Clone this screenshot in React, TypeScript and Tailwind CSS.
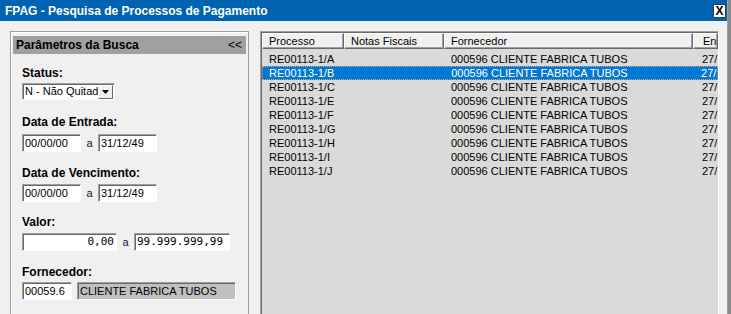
import type { ReactNode } from 'react'

const rows = ['A', 'B', 'C', 'E', 'F', 'G', 'H', 'I', 'J']

function Sunken({ className, children }: { className?: string; children?: ReactNode }) {
  return (
    <div
      className={
        'flex items-center border border-t-[#a0a0a0] border-l-[#a0a0a0] border-r-white border-b-white shadow-[inset_1px_1px_0_#696969] ' +
        (className ?? '')
      }
    >
      {children}
    </div>
  )
}

function Label({ children, className }: { children: ReactNode; className?: string }) {
  return <div className={'text-[12px] leading-[14px] font-bold text-black ' + (className ?? '')}>{children}</div>
}

function HeaderCell({ children, className }: { children: ReactNode; className?: string }) {
  return (
    <div
      className={
        'h-[16px] shrink-0 overflow-hidden whitespace-nowrap border border-t-white border-l-white border-r-[#696969] border-b-[#696969] bg-[#f0f0f0] pl-[6px] text-[11px] leading-[14px] shadow-[inset_-1px_-1px_0_#a0a0a0] ' +
        (className ?? '')
      }
    >
      {children}
    </div>
  )
}

export default function App() {
  return (
    <div className="flex h-[314px] w-[731px] overflow-hidden bg-[#f0f0f0] font-['Liberation_Sans',Arial,sans-serif] text-black">
      <div className="flex w-[727px] flex-col">
        {/* title bar */}
        <div className="flex h-[21px] shrink-0 items-center justify-between bg-[#0063b1] pl-[5px] pr-[1px]">
          <span className="text-[12px] font-bold text-white">FPAG - Pesquisa de Processos de Pagamento</span>
          <div className="mt-[1px] flex h-[14px] w-[13px] items-center justify-center border border-[#3a3a3a] bg-white text-[12px] leading-none font-bold">
            X
          </div>
        </div>

        <div className="flex flex-1 pl-[10px] pt-[10px]">
          {/* search params panel */}
          <div className="flex w-[239px] shrink-0 flex-col border border-r-[#a0a0a0] border-b-0 border-[#a0a0a0] px-[2px] pt-[4px] shadow-[inset_1px_1px_0_#fff]">
            <div className="flex h-[18px] items-center justify-between bg-[#a0a0a0] pl-[3px] pr-[4px] text-[12px] font-bold">
              <span>Parâmetros da Busca</span>
              <span className="font-normal">&lt;&lt;</span>
            </div>

            <div className="flex flex-col pl-[9px]">
              <Label className="mt-[12px]">Status:</Label>
              <Sunken className="mt-[3px] h-[17px] w-[93px] bg-white">
                <span className="flex-1 pl-[2px] text-[11px] leading-none whitespace-nowrap">N - Não Quitad</span>
                <div className="mr-[1px] flex h-[14px] w-[15px] items-center justify-center border border-t-white border-l-white border-r-[#696969] border-b-[#696969] bg-[#f0f0f0]">
                  <svg width="7" height="4" viewBox="0 0 7 4">
                    <path d="M0 0h7L3.5 4z" fill="#000" />
                  </svg>
                </div>
              </Sunken>

              <Label className="mt-[15px]">Data de Entrada:</Label>
              <div className="mt-[5px] flex items-center">
                <Sunken className="h-[18px] w-[59px] bg-white pl-[2px] text-[11px]">00/00/00</Sunken>
                <span className="w-[17px] text-center text-[11px] text-[#101040]">a</span>
                <Sunken className="h-[18px] w-[59px] bg-white pl-[2px] text-[11px]">31/12/49</Sunken>
              </div>

              <Label className="mt-[14px]">Data de Vencimento:</Label>
              <div className="mt-[4px] flex items-center">
                <Sunken className="h-[18px] w-[59px] bg-white pl-[2px] text-[11px]">00/00/00</Sunken>
                <span className="w-[17px] text-center text-[11px] text-[#101040]">a</span>
                <Sunken className="h-[18px] w-[59px] bg-white pl-[2px] text-[11px]">31/12/49</Sunken>
              </div>

              <Label className="mt-[13px]">Valor:</Label>
              <div className="mt-[4px] flex items-center">
                <Sunken className="h-[18px] w-[95px] justify-end bg-white pr-[2px] font-['DejaVu_Sans_Mono',monospace] text-[11px]">
                  0,00
                </Sunken>
                <span className="w-[17px] text-center text-[11px] text-[#101040]">a</span>
                <Sunken className="h-[18px] w-[96px] bg-white pl-[2px] font-['DejaVu_Sans_Mono',monospace] text-[11px]">
                  99.999.999,99
                </Sunken>
              </div>

              <Label className="mt-[14px]">Fornecedor:</Label>
              <div className="mt-[3px] flex items-center gap-[5px]">
                <Sunken className="h-[18px] w-[50px] bg-white pl-[2px] text-[11px]">00059.6</Sunken>
                <Sunken className="h-[18px] w-[159px] bg-[#c0c0c0] pl-[2px] text-[11px]">CLIENTE FABRICA TUBOS</Sunken>
              </div>
            </div>
          </div>

          {/* results grid */}
          <div className="ml-[11px] flex w-[459px] flex-col border-l border-t border-r border-l-[#a0a0a0] border-t-[#a0a0a0] border-r-white bg-[#dadada] pl-[1px] pt-[1px] shadow-[inset_1px_1px_0_#696969]">
            <div className="flex">
              <HeaderCell className="w-[82px]">Processo</HeaderCell>
              <HeaderCell className="w-[100px]">Notas Fiscais</HeaderCell>
              <HeaderCell className="w-[249px]">Fornecedor</HeaderCell>
              <HeaderCell className="w-[25px] pl-[9px]">En</HeaderCell>
            </div>
            <div className="mt-[3px] flex flex-col text-[11px]">
              {rows.map((r) => {
                const sel = r === 'B'
                return (
                  <div
                    key={r}
                    className={
                      'flex h-[14px] items-center whitespace-nowrap ' +
                      (sel ? 'border border-dotted border-[#e8a060] bg-[#0078d7] text-white' : 'text-black')
                    }
                  >
                    <span className={'w-[182px] ' + (sel ? 'pl-[6px]' : 'pl-[7px]')}>RE00113-1/{r}</span>
                    <span className="w-[249px] pl-[7px]">000596 CLIENTE FABRICA TUBOS</span>
                    <span className="w-[25px] overflow-hidden pl-[9px]">27/</span>
                  </div>
                )
              })}
            </div>
          </div>
        </div>
      </div>
      <div className="w-[1px] bg-[#a0a0a0]" />
      <div className="w-[3px] bg-[#8a8a8a]" />
    </div>
  )
}
